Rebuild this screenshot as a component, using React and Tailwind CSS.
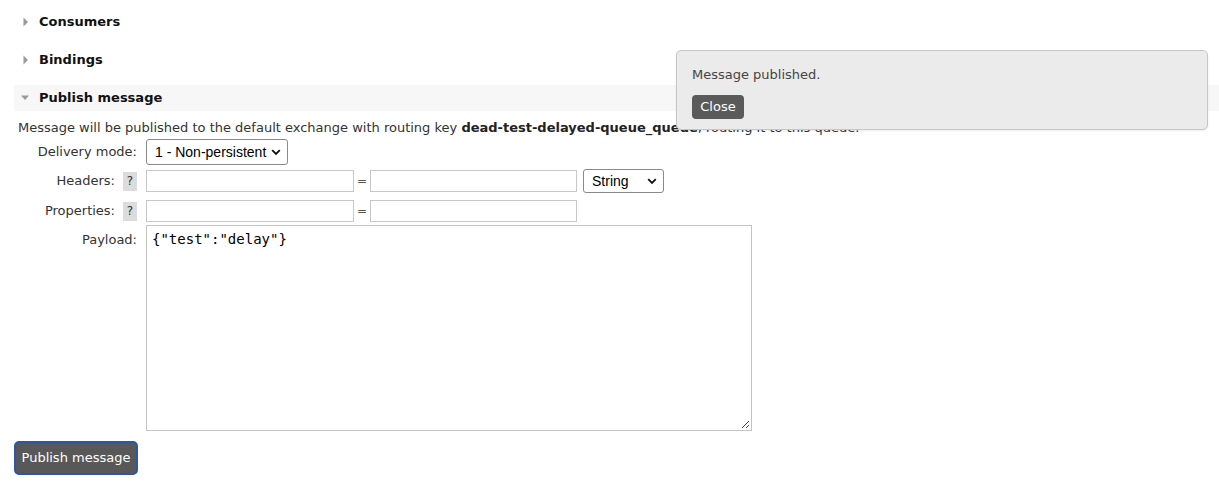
import React from 'react';

const Arrow = ({ open }) => (
  <svg width="8" height="10" viewBox="0 0 8 10" className="shrink-0">
    {open ? (
      <path d="M0 2.5 L8 2.5 L4 7 Z" fill="#9a9a9a" />
    ) : (
      <path d="M1.5 0.5 L6 5 L1.5 9.5 Z" fill="#9a9a9a" />
    )}
  </svg>
);

const SectionHeader = ({ title, open, shaded }) => (
  <div
    className={
      shaded
        ? 'flex items-center h-[26px] bg-[#f7f7f7] ml-[14px] pl-[7px] gap-[10px]'
        : 'flex items-center h-[26px] pl-[22px] gap-[9px]'
    }
  >
    <Arrow open={open} />
    <h2 className="font-bold text-[13px] text-[#111]">{title}</h2>
  </div>
);

const Help = () => (
  <span className="inline-flex items-center justify-center w-[14px] h-[19px] bg-[#dcdcdc] text-[12px] text-[#333] ml-[8px]">
    ?
  </span>
);

const FormRow = ({ label, help, children, className = '' }) => (
  <div className={`flex ${className}`}>
    <div className="w-[137px] flex items-center justify-end text-[13px] text-[#333]">
      {label}
      {help && <Help />}
    </div>
    <div className="ml-[9px] flex items-center">{children}</div>
  </div>
);

const selectCls =
  "appearance-none bg-white border border-[#8a8a8a] rounded-[3px] font-['Liberation_Sans',Arial,sans-serif] text-[14px] text-black pl-[8px] flex items-center justify-between";

const Chevron = () => (
  <svg width="10" height="7" viewBox="0 0 10 7" className="mr-[6px]">
    <path d="M1.2 1.2 L5 5 L8.8 1.2" fill="none" stroke="#111" strokeWidth="1.8" />
  </svg>
);

export default function App() {
  return (
    <div className="relative w-[1219px] h-[484px] bg-white font-['DejaVu_Sans',Verdana,sans-serif] text-[#484848] overflow-hidden">
      <div className="pt-[9px] flex flex-col gap-[12px]">
        <SectionHeader title="Consumers" />
        <SectionHeader title="Bindings" />
        <SectionHeader title="Publish message" open shaded />
      </div>

      <p className="ml-[18px] mt-[9px] text-[13px] leading-[16px] text-[#333] whitespace-nowrap">
        Message will be published to the default exchange with routing key{' '}
        <b className="text-[#222]">dead-test-delayed-queue_queue</b>, routing it to this queue.
      </p>

      <div className="mt-[3px] flex flex-col">
        <FormRow label="Delivery mode:">
          <div className={`${selectCls} w-[142px] h-[26px]`}>
            <span>1 - Non-persistent</span>
            <Chevron />
          </div>
        </FormRow>

        <FormRow label="Headers:" help className="mt-[4px]">
          <div className="w-[208px] h-[22px] border border-[#c8c8c8]" />
          <span className="w-[16px] text-center text-[12px] text-[#555]">=</span>
          <div className="w-[207px] h-[22px] border border-[#c8c8c8]" />
          <div className={`${selectCls} w-[81px] h-[24px] ml-[6px]`}>
            <span>String</span>
            <Chevron />
          </div>
        </FormRow>

        <FormRow label="Properties:" help className="mt-[7px]">
          <div className="w-[208px] h-[22px] border border-[#c8c8c8]" />
          <span className="w-[16px] text-center text-[12px] text-[#555]">=</span>
          <div className="w-[207px] h-[22px] border border-[#c8c8c8]" />
        </FormRow>

        <div className="flex mt-[3px]">
          <div className="w-[137px] text-right text-[13px] text-[#333] pt-[5px]">Payload:</div>
          <div className="ml-[9px] relative w-[606px] h-[206px] border border-[#c4c4c4] px-[5px] pt-[5px] font-['DejaVu_Sans_Mono',monospace] text-[14px] leading-[17px] text-black">
            {'{"test":"delay"}'}
            <svg width="10" height="10" viewBox="0 0 10 10" className="absolute right-[1px] bottom-[1px]">
              <path d="M9 2 L2 9 M9 6 L6 9" stroke="#444" strokeWidth="1" />
            </svg>
          </div>
        </div>
      </div>

      <button className="ml-[14px] mt-[10px] w-[124px] h-[34px] rounded-[5px] bg-[#585858] border-2 border-[#2c57a5] text-white text-[13px] font-['DejaVu_Sans',Verdana,sans-serif]">
        Publish message
      </button>

      <div className="absolute left-[676px] top-[50px] w-[532px] h-[80px] bg-[#ebebeb] border border-[#c6c6c6] rounded-[5px] px-[15px] pt-[16px] shadow-[0_1px_2px_rgba(0,0,0,0.08)]">
        <p className="text-[13px] text-[#444] leading-[16px]">Message published.</p>
        <button className="mt-[12px] w-[52px] h-[24px] rounded-[4px] bg-[#5a5a5a] text-white text-[13px]">
          Close
        </button>
      </div>
    </div>
  );
}
